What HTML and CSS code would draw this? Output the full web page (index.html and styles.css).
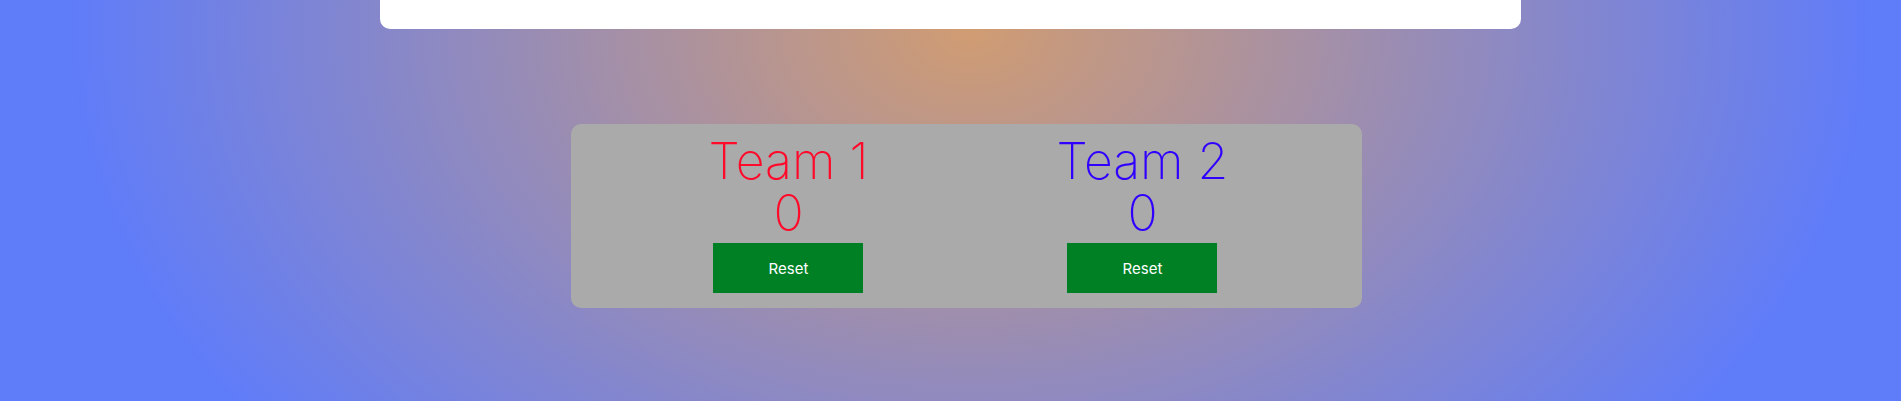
FILE: index.html
```html
<!DOCTYPE html>
<html lang="en">
<head>
<meta charset="utf-8">
<title>Scoreboard</title>
<link rel="stylesheet" href="styles.css">
</head>
<body>
  <header class="topbar"></header>
  <main class="board">
    <section class="team team-one">
      <h1 class="team-name">Team 1</h1>
      <p class="team-score">0</p>
      <button class="reset-btn" type="button">Reset</button>
    </section>
    <section class="team team-two">
      <h1 class="team-name">Team 2</h1>
      <p class="team-score">0</p>
      <button class="reset-btn" type="button">Reset</button>
    </section>
  </main>
</body>
</html>
```

FILE: styles.css
```css
html {
  min-height: 100%;
  background: radial-gradient(900px 650px at 970px 30px, #d09c72 0%, #5f7cf9 100%) no-repeat;
  background-color: #5f7cf9;
}

body {
  margin: 0;
  font-family: Inter, "Noto Sans", sans-serif;
}

.topbar {
  width: 60%;
  height: 29px;
  margin: 0 auto;
  background: #ffffff;
  border-radius: 0 0 10px 10px;
}

.board {
  box-sizing: content-box;
  width: calc(40% - 4px);
  margin: 95px 0 0 calc(30% + 1px);
  padding: 11px 18px 15px 16px;
  background: #aaaaaa;
  border-radius: 10px;
  display: flex;
  justify-content: center;
  gap: 154px;
}

.team {
  width: 200px;
  display: flex;
  flex-direction: column;
  align-items: center;
}

.team-name,
.team-score {
  margin: 0;
  font-size: 50px;
  font-weight: 200;
  line-height: 52px;
  white-space: nowrap;
}

.team-one .team-name,
.team-one .team-score {
  color: #ff0a2a;
}

.team-two .team-name,
.team-two .team-score {
  color: #3000ff;
}

.reset-btn {
  margin-top: 4px;
  width: 150px;
  height: 50px;
  border: none;
  background: #008025;
  color: #ffffff;
  font-family: Inter, "Noto Sans", sans-serif;
  font-size: 15px;
  font-weight: 400;
  padding: 0;
}
```
